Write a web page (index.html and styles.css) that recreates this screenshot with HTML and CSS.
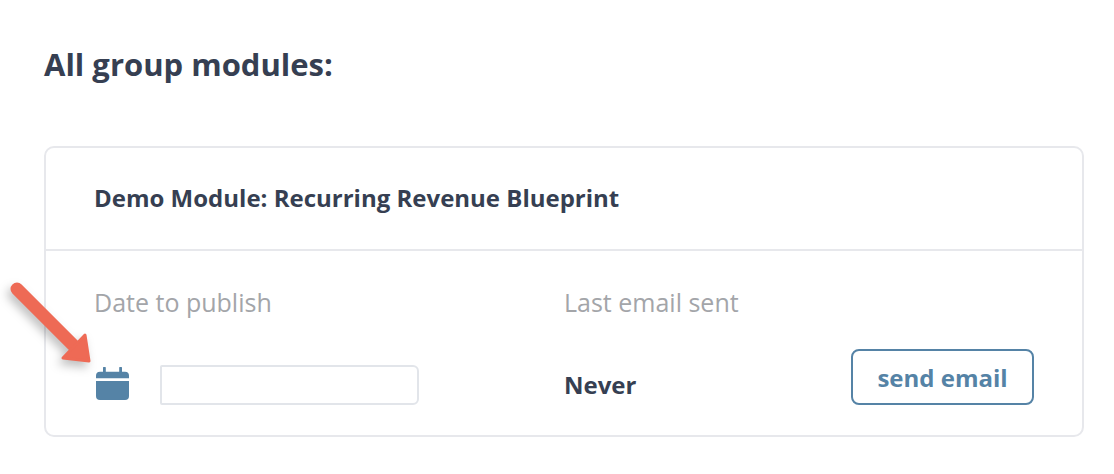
FILE: index.html
```html
<!DOCTYPE html>
<html lang="en">
<head>
  <meta charset="UTF-8">
  <title>All group modules</title>
  <link rel="stylesheet" href="styles.css">
</head>
<body>
  <h1 class="page-title">All group modules:</h1>
  <div class="card">
    <div class="card-head">Demo Module: Recurring Revenue Blueprint</div>
    <div class="card-body">
      <div class="col col-date">
        <div class="label">Date to publish</div>
        <div class="date-row">
          <svg class="cal-icon" width="33" height="33" viewBox="0 0 33 33">
            <path fill="#5583a6" d="M7 1a1 1 0 0 1 2.800 0v3.800h13.400v-3.800a1 1 0 0 1 2.800 0v3.800h3a4 4 0 0 1 4 4v2.500h-33v-2.500a4 4 0 0 1 4-4h3z"/>
            <path fill="#5583a6" d="M0 14h33v15a4 4 0 0 1-4 4h-25a4 4 0 0 1-4-4z"/>
          </svg>
          <input class="date-input" type="text">
        </div>
      </div>
      <div class="col col-email">
        <div class="label">Last email sent</div>
        <div class="email-row">
          <span class="never">Never</span>
          <button class="send-btn">send email</button>
        </div>
      </div>
    </div>
  </div>
  <svg class="arrow" width="100" height="100" viewBox="0 0 100 100">
    <path fill="none" stroke="#ee6a55" stroke-width="13" stroke-linecap="round" d="M17 17l56 56"/>
    <path fill="#ee6a55" stroke="#ee6a55" stroke-width="3" stroke-linejoin="round" d="M85 63l4 26-26-3z"/>
  </svg>
</body>
</html>
```

FILE: styles.css
```css
body {
  margin: 0;
  padding: 44px 30px 0 44px;
  background-color: #fff;
  font-family: "Open Sans", "Noto Sans", sans-serif;
  color: #363f52;
}
.page-title {
  margin: 0 0 62px;
  font-size: 31px;
  line-height: 40px;
  font-weight: 700;
}
.card {
  height: 291px;
  box-sizing: border-box;
  border: 2px solid #e7e8ec;
  border-radius: 10px;
}
.card-head {
  height: 103px;
  box-sizing: border-box;
  padding: 34px 48px 0;
  border-bottom: 2px solid #e7e8ec;
  font-size: 24px;
  line-height: 32px;
  font-weight: 700;
}
.card-body {
  display: flex;
  padding: 35px 48px 0;
}
.col-date {
  width: 470px;
}
.col-email {
  flex: 1;
}
.label {
  font-size: 25px;
  line-height: 32px;
  color: #a3a5a9;
}
.date-row {
  display: flex;
  align-items: flex-start;
  gap: 31px;
  margin-top: 47px;
}
.cal-icon {
  margin: 2px 0 0 2px;
}
.date-input {
  width: 259px;
  height: 40px;
  box-sizing: border-box;
  border: 2px solid #e2e5ea;
  border-radius: 2px 6px 6px 2px;
}
.email-row {
  display: flex;
  align-items: flex-end;
  justify-content: space-between;
  margin-top: 31px;
}
.never {
  margin-bottom: 4px;
  font-size: 24px;
  line-height: 32px;
  font-weight: 700;
}
.send-btn {
  width: 183px;
  height: 56px;
  border: 2px solid #5583a6;
  border-radius: 8px;
  background-color: #fff;
  color: #5583a6;
  font-family: inherit;
  font-size: 24px;
  font-weight: 700;
}
/* annotation arrow sits over the card */
.arrow {
  position: absolute;
  left: 0;
  top: 272px;
  filter: drop-shadow(-3px 5px 5px rgba(0, 0, 0, 0.25));
}
```
